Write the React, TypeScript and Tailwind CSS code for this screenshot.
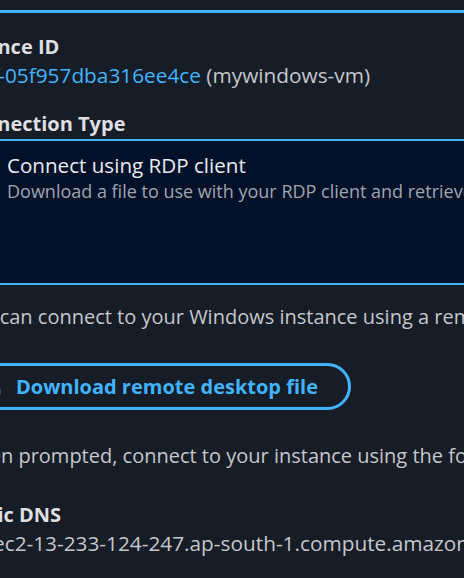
import { Copy, Download } from "lucide-react";

type FieldProps = {
  label: string;
  labelClassName?: string;
  children: React.ReactNode;
  className?: string;
};
const Field: React.FC<FieldProps> = ({ label, labelClassName, children, className }) => {
  return (
    <div className={className}>
      <div className={`font-bold text-[#dedee3] ${labelClassName ?? ""}`}>{label}</div>
      {children}
    </div>
  );
};

const CopyValue: React.FC<{ children: React.ReactNode }> = ({ children }) => {
  return (
    <div className="flex items-center gap-[11px] whitespace-nowrap text-[20.8px]">
      <Copy className="h-[23px] w-[23px] shrink-0 text-[#c6c6cd]" strokeWidth={2} />
      <span>{children}</span>
    </div>
  );
};

const RdpTile: React.FC = () => {
  return (
    <div className="mt-[1px] flex h-[146px] w-[640px] gap-[12px] rounded-[12px] border-2 border-[#42b4ff] bg-[#001129] pl-[14px] pt-[10px]">
      <span className="mt-[5px] h-[20px] w-[20px] shrink-0 rounded-full border-[6px] border-[#42b4ff] bg-[#001129]" />
      <div className="whitespace-nowrap">
        <div className="text-[20.6px] text-[#ebebf0]">Connect using RDP client</div>
        <div className="text-[18px] leading-[23px] text-[#a4a4ad]">
          Download a file to use with your RDP client and retrieve your password.
        </div>
      </div>
    </div>
  );
};

export default function App() {
  return (
    <div className="min-h-screen w-full overflow-hidden bg-[#161d26] font-['Open_Sans',sans-serif] text-[20px] leading-[29px] text-[#c6c6cd]">
      <div className="pt-[10px]">
        <div className="h-[3px] bg-[#42b4ff]" />
      </div>
      <div className="-ml-[41px] w-[760px] pt-[19px]">
        <Field label="Instance ID" labelClassName="-ml-[12px]">
          <CopyValue>
            <span className="text-[#42b4ff]">i-05f957dba316ee4ce</span> (mywindows-vm)
          </CopyValue>
        </Field>
        <Field label="Connection Type" className="mt-[19px]">
          <RdpTile />
        </Field>
        <p className="mt-[17px] whitespace-nowrap">
          You can connect to your Windows instance using a remote desktop client of your choice.
        </p>
        <button className="mt-[31.5px] flex h-[47px] items-center gap-[14px] rounded-full border-[3px] border-[#42b4ff] pl-[17px] pr-[30px] font-bold text-[#42b4ff]">
          <Download className="h-[23px] w-[23px]" strokeWidth={2.5} />
          Download remote desktop file
        </button>
        <p className="mt-[31px] whitespace-nowrap">
          When prompted, connect to your instance using the following username and password:
        </p>
        <Field label="Public DNS" labelClassName="-ml-[6px]" className="mt-[30px]">
          <CopyValue>ec2-13-233-124-247.ap-south-1.compute.amazonaws.com</CopyValue>
        </Field>
      </div>
    </div>
  );
}
